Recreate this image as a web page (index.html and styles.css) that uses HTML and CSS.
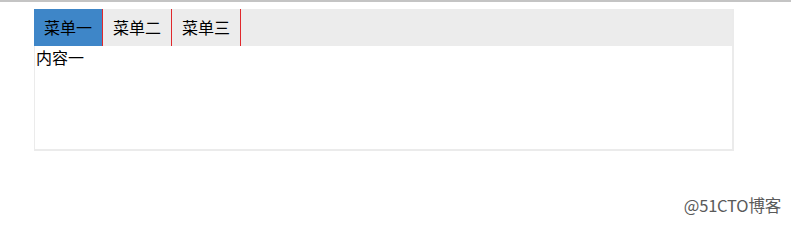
FILE: index.html
```html
<!DOCTYPE html>
<html lang="zh">
<head>
<meta charset="utf-8">
<link rel="stylesheet" href="styles.css">
</head>
<body>
<div class="topline"></div>
<div class="tabs">
  <div class="tab-head">
    <div class="tab active">菜单一</div>
    <div class="tab">菜单二</div>
    <div class="tab">菜单三</div>
  </div>
  <div class="tab-body">内容一</div>
</div>
<div class="watermark">@51CTO博客</div>
</body>
</html>
```
FILE: styles.css
```css
html, body {
  margin: 0;
  padding: 0;
  background: #fff;
}
body {
  width: 791px;
  height: 224px;
  position: relative;
  font-family: "Noto Sans CJK SC", "Noto Sans", sans-serif;
  color: #000;
}
.topline {
  height: 2px;
  background: #c4c4c4;
}
.tabs {
  margin: 7px 0 0 34px;
  width: 700px;
  height: 142px;
  box-sizing: border-box;
  border: 2px solid #ebebeb;
  border-top: none;
  border-left-width: 1px;
}
.tab-head {
  display: flex;
  height: 37px;
  background: #ececec;
  margin-left: -1px;
}
.tab {
  width: 69px;
  box-sizing: border-box;
  border-right: 1px solid #e0282c;
  text-align: center;
  font-size: 16px;
  line-height: 37px;
}
.tab.active {
  background: #3e86c8;
}
.tab-body {
  font-size: 16px;
  line-height: 22px;
  padding: 0 0 0 1px;
}
.watermark {
  position: absolute;
  right: 10px;
  top: 193px;
  font-size: 16.5px;
  color: #5a5a5a;
  font-family: "Noto Sans CJK SC", "Noto Sans", sans-serif;
  letter-spacing: -0.2px;
}
```
